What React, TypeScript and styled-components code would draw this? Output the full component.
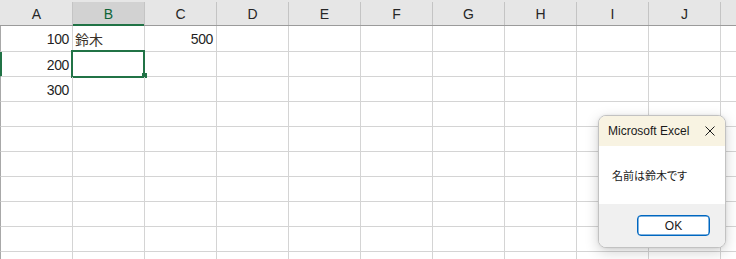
import React from "react";
import styled, { createGlobalStyle } from "styled-components";

const Global = createGlobalStyle`
  html, body { margin: 0; padding: 0; background: #ffffff; overflow: hidden; }
  body { width: 736px; height: 259px; font-family: "Liberation Sans", "Noto Sans CJK JP", sans-serif; }
`;

const Page = styled.div`
  position: relative;
  width: 736px;
  height: 259px;
  overflow: hidden;
  background: #ffffff;
`;

const Sheet = styled.div`
  display: flex;
  flex-direction: column;
  width: 800px;
`;

const HeaderRow = styled.div`
  display: flex;
  height: 26px;
  box-sizing: border-box;
  padding-top: 2px;
  padding-left: 1px;
  background: #e6e6e6;
  border-bottom: 1px solid #9b9b9b;
`;

const HeaderCell = styled.div<{ $active?: boolean }>`
  position: relative;
  flex: 0 0 72px;
  box-sizing: border-box;
  display: flex;
  align-items: center;
  justify-content: center;
  padding-top: 1px;
  border-right: 1px solid #c4c4c4;
  background: ${(p) => (p.$active ? "#d2d2d2" : "transparent")};
  color: ${(p) => (p.$active ? "#0f6537" : "#262626")};
  font-size: 14px;
  &::after {
    content: "";
    display: ${(p) => (p.$active ? "block" : "none")};
    position: absolute;
    left: 0;
    right: 0;
    bottom: -1px;
    height: 2px;
    background: #217346;
  }
`;

const Row = styled.div<{ $h: number; $active?: boolean }>`
  display: flex;
  height: ${(p) => p.$h}px;
  box-sizing: border-box;
  border-bottom: 1px solid #d4d4d4;
  border-left: 1px solid ${(p) => (p.$active ? "#217346" : "#a8a8a8")};
  box-shadow: ${(p) => (p.$active ? "inset 1px 0 0 #217346" : "none")};
`;

const Cell = styled.div<{ $align?: "left" | "right" }>`
  position: relative;
  flex: 0 0 72px;
  box-sizing: border-box;
  display: flex;
  align-items: center;
  justify-content: ${(p) => (p.$align === "right" ? "flex-end" : "flex-start")};
  padding: 1px 3px 0 2px;
  border-right: 1px solid #d4d4d4;
  color: #1f1f1f;
  font-size: 14px;
  letter-spacing: -0.4px;
  white-space: nowrap;
`;

const CjkText = styled.span`
  font-family: "Noto Sans CJK JP", sans-serif;
  font-size: 14px;
  letter-spacing: 0;
  color: #3a3128;
`;

const Selection = styled.div`
  position: absolute;
  left: -2px;
  top: -2px;
  width: 74px;
  height: 28px;
  box-sizing: border-box;
  border: 2px solid #217346;
  pointer-events: none;
`;

const FillHandle = styled.div`
  position: absolute;
  left: 69px;
  top: 21px;
  width: 5px;
  height: 5px;
  background: #217346;
`;

const Dialog = styled.div`
  position: absolute;
  left: 598px;
  top: 115px;
  width: 128px;
  height: 133px;
  box-sizing: border-box;
  display: flex;
  flex-direction: column;
  border: 1px solid #c2c2c2;
  border-radius: 8px;
  overflow: hidden;
  background: #ffffff;
  box-shadow: 0 4px 14px rgba(0, 0, 0, 0.18), 0 0 3px rgba(0, 0, 0, 0.08);
  font-family: "Liberation Sans", "Noto Sans CJK JP", sans-serif;
`;

const TitleBar = styled.div`
  display: flex;
  align-items: center;
  justify-content: space-between;
  height: 30px;
  padding: 0 10px 0 9px;
  background: #f8f3e2;
  color: #1a1a1a;
  font-size: 12px;
`;

const CloseIcon = styled.svg`
  width: 10px;
  height: 10px;
  display: block;
`;

const DialogBody = styled.div`
  display: flex;
  align-items: center;
  height: 58px;
  padding-left: 13px;
  background: #ffffff;
`;

const Message = styled.span`
  font-family: "Noto Sans CJK JP", sans-serif;
  font-size: 11px;
  font-feature-settings: "palt";
  color: #1a1a1a;
`;

const Footer = styled.div`
  flex: 1;
  display: flex;
  justify-content: flex-end;
  align-items: flex-start;
  padding: 11px 15px 0 0;
  background: #f0f0f0;
`;

const OkButton = styled.button`
  width: 73px;
  height: 21px;
  box-sizing: border-box;
  padding: 0;
  border: 1px solid #0067c0;
  box-shadow: inset 0 0 0 0.5px #0067c0;
  border-radius: 4px;
  background: #ffffff;
  color: #1a1a1a;
  font-family: "Liberation Sans", sans-serif;
  font-size: 12px;
`;

// The 11th column only shows its left sliver at the right edge, so its label is off screen.
const columns = ["A", "B", "C", "D", "E", "F", "G", "H", "I", "J", ""];

type CellData = { text?: string; align?: "left" | "right"; cjk?: boolean; selected?: boolean };

const rows: { h: number; active?: boolean; cells: Record<string, CellData> }[] = [
  { h: 26, cells: { A: { text: "100", align: "right" }, B: { text: "鈴木", cjk: true }, C: { text: "500", align: "right" } } },
  { h: 25, active: true, cells: { A: { text: "200", align: "right" }, B: { selected: true } } },
  { h: 25, cells: { A: { text: "300", align: "right" } } },
  { h: 25, cells: {} },
  { h: 25, cells: {} },
  { h: 25, cells: {} },
  { h: 25, cells: {} },
  { h: 25, cells: {} },
  { h: 25, cells: {} },
  { h: 25, cells: {} },
];

export default function App() {
  return (
    <Page>
      <Global />
      <Sheet>
        <HeaderRow>
          {columns.map((c, i) => (
            <HeaderCell key={i} $active={c === "B"}>
              {c}
            </HeaderCell>
          ))}
        </HeaderRow>
        {rows.map((r, i) => (
          <Row key={i} $h={r.h} $active={r.active}>
            {columns.map((c, j) => {
              const d = c ? r.cells[c] : undefined;
              return (
                <Cell key={j} $align={d?.align}>
                  {d?.text && (d.cjk ? <CjkText>{d.text}</CjkText> : d.text)}
                  {d?.selected && (
                    <Selection>
                      <FillHandle />
                    </Selection>
                  )}
                </Cell>
              );
            })}
          </Row>
        ))}
      </Sheet>
      <Dialog>
        <TitleBar>
          <span>Microsoft Excel</span>
          <CloseIcon viewBox="0 0 10 10">
            <path d="M0.5 0.5 L9.5 9.5 M9.5 0.5 L0.5 9.5" stroke="#1a1a1a" strokeWidth="1" fill="none" />
          </CloseIcon>
        </TitleBar>
        <DialogBody>
          <Message>名前は鈴木です</Message>
        </DialogBody>
        <Footer>
          <OkButton>OK</OkButton>
        </Footer>
      </Dialog>
    </Page>
  );
}
